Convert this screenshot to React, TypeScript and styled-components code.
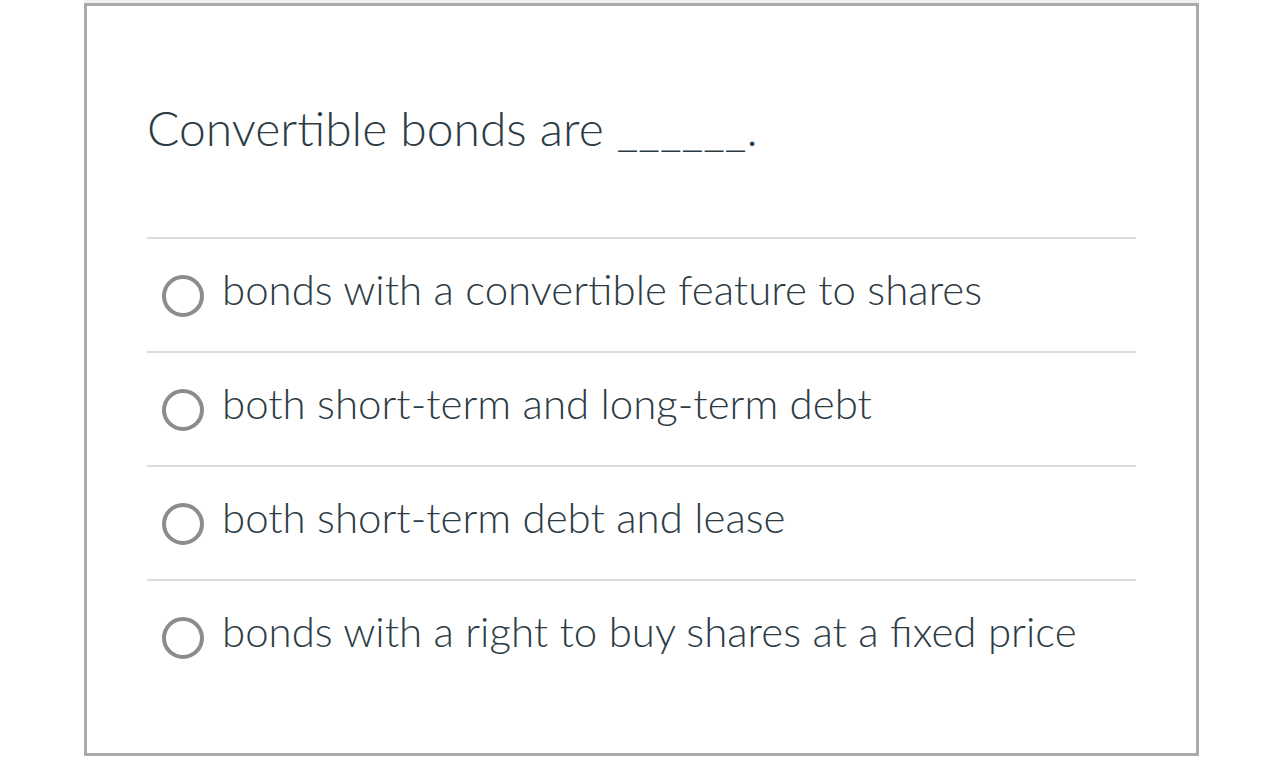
import React from "react";
import styled, { createGlobalStyle } from "styled-components";

const GlobalStyle = createGlobalStyle`
  html, body { margin: 0; padding: 0; background: #ffffff; }
  body { font-family: Lato, "Noto Sans", sans-serif; }
`;

const Page = styled.div`
  width: 1115px;
  margin-left: 84px;
`;

const TopStrip = styled.div`
  height: 3px;
  background: #efefef;
`;

const Card = styled.div`
  border: 3px solid #aaaaaa;
  padding: 0 60px 60px;
`;

const Question = styled.div`
  font-family: Lato, "Noto Sans", sans-serif;
  font-weight: 300;
  font-size: 48px;
  line-height: 60px;
  color: #2d3b45;
  padding: 92px 0 79px;
`;

const Options = styled.div`
  display: flex;
  flex-direction: column;
`;

const Option = styled.label`
  display: flex;
  align-items: center;
  height: 112px;
  border-top: 2px solid #dcdcdc;
  padding-left: 15px;
  gap: 18px;
  cursor: pointer;
`;

const Radio = styled.span`
  box-sizing: border-box;
  width: 42px;
  height: 42px;
  border-radius: 50%;
  border: 4px solid #8c8c8c;
  flex: none;
  margin-top: 2px;
`;

const OptionText = styled.span`
  font-family: Lato, "Noto Sans", sans-serif;
  font-weight: 300;
  font-size: 42px;
  line-height: 48px;
  color: #2d3b45;
  padding-bottom: 12px;
`;

const answers = [
  "bonds with a convertible feature to shares",
  "both short-term and long-term debt",
  "both short-term debt and lease",
  "bonds with a right to buy shares at a fixed price",
];

export default function App() {
  return (
    <>
      <GlobalStyle />
      <Page>
        <TopStrip />
        <Card>
          <Question>Convertible bonds are ______.</Question>
          <Options>
            {answers.map((a) => (
              <Option key={a}>
                <Radio />
                <OptionText>{a}</OptionText>
              </Option>
            ))}
          </Options>
        </Card>
      </Page>
    </>
  );
}
